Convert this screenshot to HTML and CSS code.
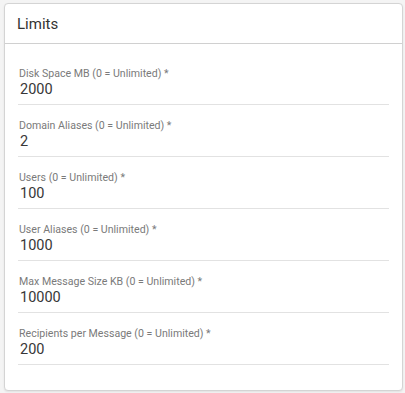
FILE: index.html
```html
<!DOCTYPE html>
<html lang="en">
<head>
    <meta charset="UTF-8">
    <title>Limits</title>
    <meta name="viewport" content="width=device-width, initial-scale=1">
    <link rel="stylesheet" href="styles.css">
</head>
<body>
    <div class="card">
        <div class="card-header">Limits</div>
        <div class="card-body">
            <div class="field">
                <label>Disk Space MB (0 = Unlimited) *</label>
                <div class="value">2000</div>
            </div>
            <div class="field">
                <label>Domain Aliases (0 = Unlimited) *</label>
                <div class="value">2</div>
            </div>
            <div class="field">
                <label>Users (0 = Unlimited) *</label>
                <div class="value">100</div>
            </div>
            <div class="field">
                <label>User Aliases (0 = Unlimited) *</label>
                <div class="value">1000</div>
            </div>
            <div class="field">
                <label>Max Message Size KB (0 = Unlimited) *</label>
                <div class="value">10000</div>
            </div>
            <div class="field">
                <label>Recipients per Message (0 = Unlimited) *</label>
                <div class="value">200</div>
            </div>
        </div>
    </div>
</body>
</html>
```

FILE: styles.css
```css
/* Base */
* {
    box-sizing: border-box;
    margin: 0;
    padding: 0;
}
body {
    font-family: Roboto, "Liberation Sans", sans-serif;
    background-color: #f4f4f4;
    padding: 3px 2px 3px 4px;
}
/* Card */
.card {
    background-color: #fff;
    border: 1px solid #d4d4d4;
    border-radius: 4px;
    box-shadow: 0 1px 2px rgba(0,0,0,0.08);
}
.card-header {
    height: 40px;
    padding: 0 12px;
    display: flex;
    align-items: center;
    font-size: 15px;
    color: #333;
    border-bottom: 1px solid #d0d0d0;
}
.card-body {
    padding: 23px 13px 25px;
}
/* Fields */
.field {
    padding-bottom: 5px;
    border-bottom: 1px solid #e2e2e2;
    margin-bottom: 14px;
}
.field:last-child {
    margin-bottom: 0;
}
.field label {
    display: block;
    font-size: 10.6px;
    line-height: 14px;
    color: #7a7a7a;
    padding-left: 1px;
}
.field .value {
    font-size: 14.5px;
    line-height: 18px;
    color: #383838;
    padding-left: 2px;
}
```
